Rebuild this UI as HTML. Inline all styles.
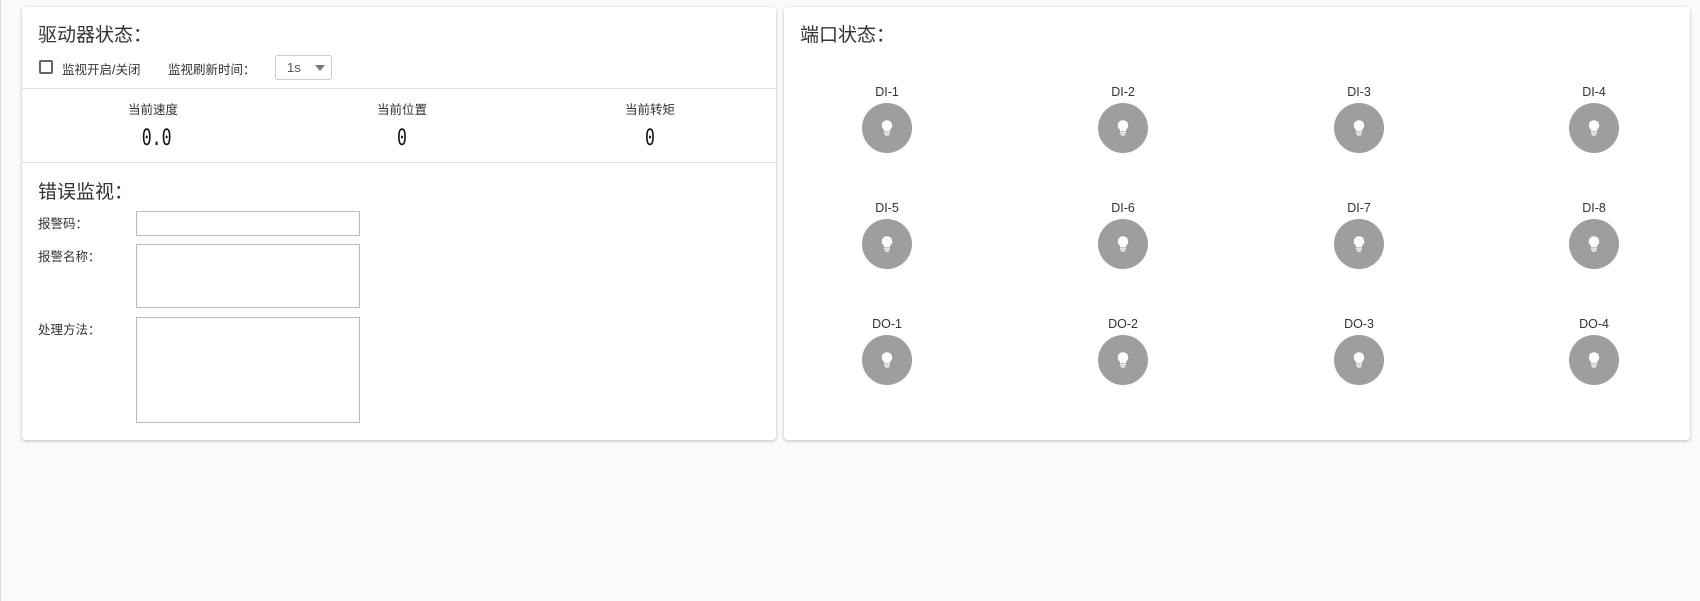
<!DOCTYPE html>
<html><head><meta charset="utf-8"><style>
*{box-sizing:border-box;margin:0;padding:0}
body{width:1700px;height:601px;background:#fafafa;font-family:"Liberation Sans","Noto Sans CJK SC",sans-serif;color:#333;position:relative;overflow:hidden;border-left:1px solid #ddd}
.card{position:absolute;background:#fff;border-radius:4px;box-shadow:0 1px 3px rgba(0,0,0,.25)}
.a{position:absolute;white-space:nowrap}
.h{font-size:19px;color:#333}
.s{font-size:12.5px}
.line{position:absolute;left:0;right:0;height:1px;background:#e0e0e0}
.val{font-family:"DejaVu Sans Mono","Liberation Mono",monospace;font-size:22px;transform:scaleX(.75);color:#111}
.box{position:absolute;border:1px solid #bbb;background:#fff}
.lbl{font-size:12.5px;width:60px;text-align:center;margin-left:-30px}
.bulb{position:absolute;width:50px;height:50px;border-radius:50%;background:#9e9e9e;margin-left:-25px;margin-top:-25px}
.bulb svg{position:absolute;left:19px;top:16px}
</style></head><body>
<div class="card" style="left:21px;top:7px;width:754px;height:433px">
 <div class="a h" style="left:16px;top:13px">驱动器状态：</div>
 <div class="a" style="left:17px;top:53px;width:14px;height:14px;border:2px solid #666;border-radius:2px"></div>
 <div class="a s" style="left:40px;top:52px">监视开启/关闭</div>
 <div class="a s" style="left:146px;top:52px">监视刷新时间：</div>
 <div class="a" style="left:253px;top:48px;width:57px;height:25px;border:1px solid #ccc;border-radius:3px"><span style="position:absolute;left:11px;top:4px;font-size:13px;color:#555">1s</span><span style="position:absolute;left:39px;top:9px;border-left:5px solid transparent;border-right:5px solid transparent;border-top:6px solid #777"></span></div>
 <div class="line" style="top:81px"></div>
 <div class="a s" style="left:131px;top:92px;width:0"><span style="position:absolute;left:-30px;width:60px;text-align:center">当前速度</span></div>
 <div class="a s" style="left:380px;top:92px;width:0"><span style="position:absolute;left:-30px;width:60px;text-align:center">当前位置</span></div>
 <div class="a s" style="left:628px;top:92px;width:0"><span style="position:absolute;left:-30px;width:60px;text-align:center">当前转矩</span></div>
 <div class="a val" style="left:116px;top:119px;width:30px;text-align:center">0.0</div>
 <div class="a val" style="left:365px;top:119px;width:30px;text-align:center">0</div>
 <div class="a val" style="left:613px;top:119px;width:30px;text-align:center">0</div>
 <div class="line" style="top:155px"></div>
 <div class="a h" style="left:16px;top:170px">错误监视：</div>
 <div class="a s" style="left:16px;top:206px">报警码：</div>
 <div class="box" style="left:114px;top:204px;width:224px;height:25px"></div>
 <div class="a s" style="left:16px;top:239px">报警名称：</div>
 <div class="box" style="left:114px;top:237px;width:224px;height:64px"></div>
 <div class="a s" style="left:16px;top:312px">处理方法：</div>
 <div class="box" style="left:114px;top:310px;width:224px;height:106px"></div>
</div>
<div class="card" style="left:783px;top:7px;width:906px;height:433px">
 <div class="a h" style="left:16px;top:13px">端口状态：</div>
</div>
<div style="position:absolute;left:0;top:0">
<div class="a lbl" style="left:886px;top:85px">DI-1</div><div class="bulb" style="left:886px;top:128px"><svg width="12" height="18" viewBox="0 0 14 20"><path d="M7 1a6 6 0 0 0-3.5 10.9V14h7v-2.1A6 6 0 0 0 7 1z" fill="#fff"/><rect x="3.5" y="15" width="7" height="1.5" fill="#fff"/><rect x="4.5" y="17.3" width="5" height="1.5" fill="#fff"/></svg></div>
<div class="a lbl" style="left:1122px;top:85px">DI-2</div><div class="bulb" style="left:1122px;top:128px"><svg width="12" height="18" viewBox="0 0 14 20"><path d="M7 1a6 6 0 0 0-3.5 10.9V14h7v-2.1A6 6 0 0 0 7 1z" fill="#fff"/><rect x="3.5" y="15" width="7" height="1.5" fill="#fff"/><rect x="4.5" y="17.3" width="5" height="1.5" fill="#fff"/></svg></div>
<div class="a lbl" style="left:1358px;top:85px">DI-3</div><div class="bulb" style="left:1358px;top:128px"><svg width="12" height="18" viewBox="0 0 14 20"><path d="M7 1a6 6 0 0 0-3.5 10.9V14h7v-2.1A6 6 0 0 0 7 1z" fill="#fff"/><rect x="3.5" y="15" width="7" height="1.5" fill="#fff"/><rect x="4.5" y="17.3" width="5" height="1.5" fill="#fff"/></svg></div>
<div class="a lbl" style="left:1593px;top:85px">DI-4</div><div class="bulb" style="left:1593px;top:128px"><svg width="12" height="18" viewBox="0 0 14 20"><path d="M7 1a6 6 0 0 0-3.5 10.9V14h7v-2.1A6 6 0 0 0 7 1z" fill="#fff"/><rect x="3.5" y="15" width="7" height="1.5" fill="#fff"/><rect x="4.5" y="17.3" width="5" height="1.5" fill="#fff"/></svg></div>
<div class="a lbl" style="left:886px;top:201px">DI-5</div><div class="bulb" style="left:886px;top:244px"><svg width="12" height="18" viewBox="0 0 14 20"><path d="M7 1a6 6 0 0 0-3.5 10.9V14h7v-2.1A6 6 0 0 0 7 1z" fill="#fff"/><rect x="3.5" y="15" width="7" height="1.5" fill="#fff"/><rect x="4.5" y="17.3" width="5" height="1.5" fill="#fff"/></svg></div>
<div class="a lbl" style="left:1122px;top:201px">DI-6</div><div class="bulb" style="left:1122px;top:244px"><svg width="12" height="18" viewBox="0 0 14 20"><path d="M7 1a6 6 0 0 0-3.5 10.9V14h7v-2.1A6 6 0 0 0 7 1z" fill="#fff"/><rect x="3.5" y="15" width="7" height="1.5" fill="#fff"/><rect x="4.5" y="17.3" width="5" height="1.5" fill="#fff"/></svg></div>
<div class="a lbl" style="left:1358px;top:201px">DI-7</div><div class="bulb" style="left:1358px;top:244px"><svg width="12" height="18" viewBox="0 0 14 20"><path d="M7 1a6 6 0 0 0-3.5 10.9V14h7v-2.1A6 6 0 0 0 7 1z" fill="#fff"/><rect x="3.5" y="15" width="7" height="1.5" fill="#fff"/><rect x="4.5" y="17.3" width="5" height="1.5" fill="#fff"/></svg></div>
<div class="a lbl" style="left:1593px;top:201px">DI-8</div><div class="bulb" style="left:1593px;top:244px"><svg width="12" height="18" viewBox="0 0 14 20"><path d="M7 1a6 6 0 0 0-3.5 10.9V14h7v-2.1A6 6 0 0 0 7 1z" fill="#fff"/><rect x="3.5" y="15" width="7" height="1.5" fill="#fff"/><rect x="4.5" y="17.3" width="5" height="1.5" fill="#fff"/></svg></div>
<div class="a lbl" style="left:886px;top:317px">DO-1</div><div class="bulb" style="left:886px;top:360px"><svg width="12" height="18" viewBox="0 0 14 20"><path d="M7 1a6 6 0 0 0-3.5 10.9V14h7v-2.1A6 6 0 0 0 7 1z" fill="#fff"/><rect x="3.5" y="15" width="7" height="1.5" fill="#fff"/><rect x="4.5" y="17.3" width="5" height="1.5" fill="#fff"/></svg></div>
<div class="a lbl" style="left:1122px;top:317px">DO-2</div><div class="bulb" style="left:1122px;top:360px"><svg width="12" height="18" viewBox="0 0 14 20"><path d="M7 1a6 6 0 0 0-3.5 10.9V14h7v-2.1A6 6 0 0 0 7 1z" fill="#fff"/><rect x="3.5" y="15" width="7" height="1.5" fill="#fff"/><rect x="4.5" y="17.3" width="5" height="1.5" fill="#fff"/></svg></div>
<div class="a lbl" style="left:1358px;top:317px">DO-3</div><div class="bulb" style="left:1358px;top:360px"><svg width="12" height="18" viewBox="0 0 14 20"><path d="M7 1a6 6 0 0 0-3.5 10.9V14h7v-2.1A6 6 0 0 0 7 1z" fill="#fff"/><rect x="3.5" y="15" width="7" height="1.5" fill="#fff"/><rect x="4.5" y="17.3" width="5" height="1.5" fill="#fff"/></svg></div>
<div class="a lbl" style="left:1593px;top:317px">DO-4</div><div class="bulb" style="left:1593px;top:360px"><svg width="12" height="18" viewBox="0 0 14 20"><path d="M7 1a6 6 0 0 0-3.5 10.9V14h7v-2.1A6 6 0 0 0 7 1z" fill="#fff"/><rect x="3.5" y="15" width="7" height="1.5" fill="#fff"/><rect x="4.5" y="17.3" width="5" height="1.5" fill="#fff"/></svg></div>
</div>
</body></html>
